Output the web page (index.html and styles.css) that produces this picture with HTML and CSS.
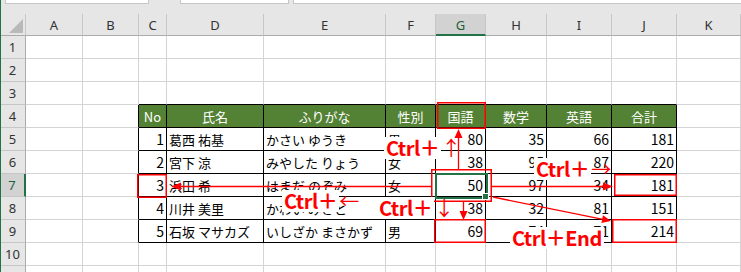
FILE: index.html
```html
<!DOCTYPE html>
<html lang="ja">
<head>
<meta charset="utf-8">
<title>Excel Ctrl+矢印</title>
<link rel="stylesheet" href="styles.css">
</head>
<body>
<div class="app">
  <div class="toolbar">
    <div class="box b1"></div>
    <div class="box b2"></div>
    <div class="box b3"></div>
  </div>
  <div class="sheet">
    <div class="corner"><span class="tri"></span></div>
    <div class="ch">A</div><div class="ch">B</div><div class="ch">C</div><div class="ch">D</div><div class="ch">E</div><div class="ch">F</div><div class="ch sel">G</div><div class="ch">H</div><div class="ch">I</div><div class="ch">J</div><div class="ch">K</div>

    <div class="rh">1</div><div class="c"></div><div class="c"></div><div class="c"></div><div class="c"></div><div class="c"></div><div class="c"></div><div class="c"></div><div class="c"></div><div class="c"></div><div class="c"></div><div class="c"></div>
    <div class="rh">2</div><div class="c"></div><div class="c"></div><div class="c"></div><div class="c"></div><div class="c"></div><div class="c"></div><div class="c"></div><div class="c"></div><div class="c"></div><div class="c"></div><div class="c"></div>
    <div class="rh">3</div><div class="c"></div><div class="c"></div><div class="c bt"></div><div class="c bt"></div><div class="c bt"></div><div class="c bt"></div><div class="c bt"></div><div class="c bt"></div><div class="c bt"></div><div class="c bt"></div><div class="c"></div>

    <div class="rh">4</div><div class="c"></div><div class="c bl"></div>
    <div class="c t th">No</div><div class="c t th">氏名</div><div class="c t th">ふりがな</div><div class="c t th">性別</div><div class="c t th">国語</div><div class="c t th">数学</div><div class="c t th">英語</div><div class="c t th">合計</div><div class="c"></div>

    <div class="rh">5</div><div class="c"></div><div class="c bl"></div>
    <div class="c t n">1</div><div class="c t">葛西 祐基</div><div class="c t">かさい ゆうき</div><div class="c t">男</div><div class="c t n">80</div><div class="c t n">35</div><div class="c t n">66</div><div class="c t n">181</div><div class="c"></div>

    <div class="rh">6</div><div class="c"></div><div class="c bl"></div>
    <div class="c t n">2</div><div class="c t">宮下 涼</div><div class="c t">みやした りょう</div><div class="c t">女</div><div class="c t n">38</div><div class="c t n">95</div><div class="c t n">87</div><div class="c t n">220</div><div class="c"></div>

    <div class="rh rsel">7</div><div class="c"></div><div class="c bl"></div>
    <div class="c t n">3</div><div class="c t">浜田 希</div><div class="c t">はまだ のぞみ</div><div class="c t">女</div><div class="c t n">50</div><div class="c t n">97</div><div class="c t n">34</div><div class="c t n">181</div><div class="c"></div>

    <div class="rh">8</div><div class="c"></div><div class="c bl"></div>
    <div class="c t n">4</div><div class="c t">川井 美里</div><div class="c t">かわい みさと</div><div class="c t">女</div><div class="c t n">38</div><div class="c t n">32</div><div class="c t n">81</div><div class="c t n">151</div><div class="c"></div>

    <div class="rh">9</div><div class="c"></div><div class="c bl"></div>
    <div class="c t n">5</div><div class="c t">石坂 マサカズ</div><div class="c t">いしざか まさかず</div><div class="c t">男</div><div class="c t n">69</div><div class="c t n">74</div><div class="c t n">71</div><div class="c t n">214</div><div class="c"></div>

    <div class="rh">10</div><div class="c"></div><div class="c"></div><div class="c"></div><div class="c"></div><div class="c"></div><div class="c"></div><div class="c"></div><div class="c"></div><div class="c"></div><div class="c"></div><div class="c"></div>
    <div class="rh"></div><div class="c"></div><div class="c"></div><div class="c"></div><div class="c"></div><div class="c"></div><div class="c"></div><div class="c"></div><div class="c"></div><div class="c"></div><div class="c"></div><div class="c"></div>
  </div>

  <div class="selection"><span class="handle"></span></div>

  <svg class="overlay" width="741" height="272" viewBox="0 0 741 272" aria-hidden="true">
    <g fill="none" stroke="#ff0000" stroke-width="1.5">
      <rect x="437.75" y="102.75" width="47.5" height="25.5"/>
      <rect x="431.75" y="169.75" width="59.5" height="31.5"/>
      <rect x="137.75" y="174.75" width="28.5" height="22.5"/>
      <rect x="434.75" y="219.75" width="50.5" height="22.5"/>
      <rect x="614.75" y="174.75" width="61.5" height="20.5"/>
      <rect x="612.75" y="219.75" width="63.5" height="22.5"/>
    </g>
    <g stroke="#ff0000" stroke-width="1.3" fill="none">
      <line x1="458.5" y1="169" x2="458.5" y2="135"/>
      <line x1="431" y1="186.5" x2="178" y2="186.5"/>
      <line x1="492" y1="186.5" x2="605" y2="186.5"/>
      <line x1="463.5" y1="202" x2="463.5" y2="213"/>
      <line x1="493" y1="197" x2="603" y2="219.4"/>
    </g>
    <g fill="#ff0000">
      <polygon points="458.5,129 454.5,138 462.5,138"/>
      <polygon points="171,186.5 181,182.5 181,190.5"/>
      <polygon points="613,186.5 603,182.5 603,190.5"/>
      <polygon points="463.5,220 459.5,211 467.5,211"/>
      <polygon points="611,221 603,215.3 601.4,223.1"/>
    </g>
  </svg>

  <div class="label l1"><span class="key">Ctrl＋</span><span class="arr">↑</span></div>
  <div class="label l2"><span class="key">Ctrl＋</span><span class="arr">←</span></div>
  <div class="label l3"><span class="key">Ctrl＋</span><span class="arr">↓</span></div>
  <div class="label l4"><span class="key">Ctrl＋</span><span class="arr">→</span></div>
  <div class="label l5"><span class="key">Ctrl＋End</span></div>
</div>
</body>
</html>
```

FILE: styles.css
```css
html, body {
  margin: 0;
  padding: 0;
  background: #ffffff;
}

body {
  width: 741px;
  height: 272px;
  overflow: hidden;
  font-family: "Noto Sans CJK JP", "Noto Sans", sans-serif;
}

.app {
  position: relative;
  width: 741px;
  height: 272px;
  overflow: hidden;
}

.app::before {
  content: "";
  position: absolute;
  left: 0;
  top: 0;
  width: 1px;
  height: 272px;
  background: #217346;
  z-index: 3;
}

.toolbar {
  display: flex;
  height: 14px;
  background: #e6e6e6;
}

.box {
  height: 4px;
  background: #ffffff;
  border: 1px solid #c6c6c6;
  border-top: none;
  box-sizing: border-box;
}

.b1 { margin-left: 5px; width: 144px; }
.b2 { margin-left: 31px; width: 109px; }
.b3 { margin-left: 4px; flex: 1; border-right: none; }

.sheet {
  display: grid;
  grid-template-columns: 26px 57px 56px 28px 97px 122px 50px 50px 61px 65px 65px 64px;
  grid-template-rows: 22px;
  grid-auto-rows: 23px;
}

.corner {
  position: relative;
  background: #e6e6e6;
  border-right: 1px solid #c6c6c6;
  border-bottom: 1px solid #ababab;
  box-sizing: border-box;
}

.tri {
  position: absolute;
  left: 9px;
  top: 5px;
  width: 0;
  height: 0;
  border-left: 14px solid transparent;
  border-bottom: 14px solid #b9b9b9;
}

.ch {
  background: #e6e6e6;
  border-right: 1px solid #c6c6c6;
  border-bottom: 1px solid #ababab;
  box-sizing: border-box;
  display: flex;
  align-items: center;
  justify-content: center;
  font-family: "Noto Sans", sans-serif;
  font-size: 13px;
  color: #333333;
  padding-top: 1px;
}

.ch.sel {
  background: #d2d2d2;
  border-bottom: 2px solid #217346;
  color: #1e5e3b;
}

.rh {
  background: #e6e6e6;
  border-right: 1px solid #ababab;
  border-bottom: 1px solid #c6c6c6;
  box-sizing: border-box;
  display: flex;
  align-items: center;
  justify-content: center;
  font-family: "Noto Sans", sans-serif;
  font-size: 13px;
  color: #333333;
}

.rh.rsel {
  background: #d2d2d2;
  border-right: 2px solid #217346;
  color: #1e5e3b;
}

.c {
  border-right: 1px solid #d4d4d4;
  border-bottom: 1px solid #d4d4d4;
  box-sizing: border-box;
  display: flex;
  align-items: center;
  padding: 0 2px;
  font-size: 13px;
  color: #000000;
  white-space: nowrap;
  overflow: visible;
}

.c.bt { border-bottom-color: #000000; }
.c.bl { border-right-color: #000000; }

.c.t {
  border-right-color: #000000;
  border-bottom-color: #000000;
}

.c.th {
  background: #548235;
  color: #ffffff;
  justify-content: center;
}

.c.n {
  justify-content: flex-end;
  font-size: 14px;
  padding-right: 2px;
}

.selection {
  position: absolute;
  left: 435px;
  top: 173px;
  width: 53px;
  height: 26px;
  border: 2px solid #217346;
  box-sizing: border-box;
  z-index: 2;
}

.handle {
  position: absolute;
  right: -3px;
  bottom: -3px;
  width: 5px;
  height: 5px;
  background: #217346;
  border: 1px solid #ffffff;
  box-sizing: content-box;
}

.overlay {
  position: absolute;
  left: 0;
  top: 0;
  z-index: 4;
}

.label {
  position: absolute;
  display: flex;
  align-items: center;
  color: #ff0000;
  font-family: "Noto Sans CJK JP", sans-serif;
  z-index: 5;
  white-space: nowrap;
}

.key {
  background: #ffffff;
  font-weight: 700;
  font-size: 20px;
  line-height: 20px;
  padding: 1px 2px;
  letter-spacing: -0.5px;
}

.arr {
  font-size: 20px;
  line-height: 20px;
  font-weight: 400;
  margin-left: 0;
}

.l1 { left: 384px; top: 137px; }
.l2 { left: 282px; top: 190px; }
.l3 { left: 377px; top: 197px; }
.l4 { left: 534px; top: 158px; }
.l5 { left: 510px; top: 227px; }
```
